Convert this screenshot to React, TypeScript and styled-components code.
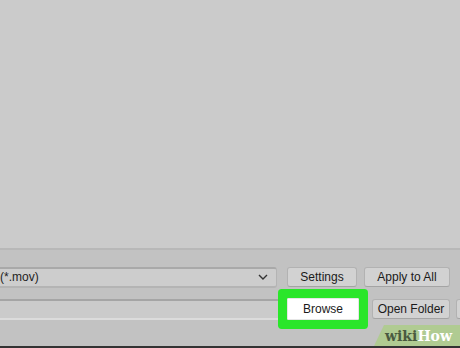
import React from 'react';
import styled, {createGlobalStyle} from 'styled-components';

const Global = createGlobalStyle`
    html, body {
        margin: 0;
        padding: 0;
        background: #cbcbcb;
        overflow: hidden;
    }
    body {
        font-family: "Liberation Sans", Arial, sans-serif;
    }
`

const Screen = styled.div`
    position: relative;
    width: 460px;
    height: 348px;
    display: flex;
    flex-direction: column;
    overflow: hidden;
`

const Preview = styled.div`
    height: 248px;
    background: #cbcbcb;
`

const Panel = styled.div`
    flex: 1;
    display: flex;
    flex-direction: column;
    border-top: 2px solid #b8b8b8;
    background: #c2c2c2;
    padding-top: 16px;
    gap: 10px;
    border-bottom: 2px solid #333;
`

const Row = styled.div`
    display: flex;
    align-items: center;
    height: 22px;
    & > * {
        flex: none;
    }
`

const Combo = styled.div`
    box-sizing: border-box;
    width: 277px;
    height: 21px;
    display: flex;
    align-items: center;
    justify-content: space-between;
    padding: 0 8px 0 0;
    background: #cdcdcd;
    border-top: 2px solid #a9a9a9;
    border-bottom: 2px solid #b4b4b4;
    border-right: 1px solid #b4b4b4;
    border-radius: 0 3px 3px 0;
    font-size: 12px;
    color: #1e1e1e;
`

const Field = styled.div`
    box-sizing: border-box;
    width: 280px;
    height: 21px;
    background: #cbcbcb;
    border-top: 2px solid #a5a5a5;
    border-bottom: 2px solid #dcdcdc;
`

const Button = styled.div<{$w: number; $ml: number; $marked?: boolean}>`
    box-sizing: border-box;
    position: relative;
    width: ${p => p.$w}px;
    margin-left: ${p => p.$ml}px;
    height: ${p => (p.$marked ? 22 : 20)}px;
    display: flex;
    align-items: center;
    justify-content: center;
    background: ${p => (p.$marked ? '#ffffff' : '#d2d2d2')};
    border: 1px solid ${p => (p.$marked ? '#e6e6e6' : '#b2b2b2')};
    border-bottom-color: ${p => (p.$marked ? '#e6e6e6' : '#a4a4a4')};
    border-radius: ${p => (p.$marked ? 1 : 3)}px;
    box-shadow: ${p => (p.$marked ? '0 0 0 9px #2ae62a' : 'none')};
    font-size: 12px;
    color: #1a1a1a;
    white-space: nowrap;
`

const Watermark = styled.div`
    position: absolute;
    right: 0;
    bottom: 2px;
    width: 86px;
    height: 21px;
    background: rgba(170, 205, 130, 0.75);
    clip-path: polygon(10px 0, 100% 0, 100% 100%, 0 100%);
    display: flex;
    align-items: center;
    padding-left: 11px;
    box-sizing: border-box;
    font-family: "DejaVu Serif", "Liberation Serif", serif;
    font-weight: bold;
    font-size: 14px;
`

const Wiki = styled.span`
    color: #4a5a40;
`

const How = styled.span`
    color: #ffffff;
`

export default function App() {
    return (
        <Screen>
            <Global/>
            <Preview/>
            <Panel>
                <Row>
                    <Combo>
                        <span>(*.mov)</span>
                        <svg width="10" height="6" viewBox="0 0 10 6">
                            <path d="M1 1 L5 5 L9 1" fill="none" stroke="#333" strokeWidth="1.4"/>
                        </svg>
                    </Combo>
                    <Button $w={70} $ml={10}>Settings</Button>
                    <Button $w={86} $ml={7}>Apply to All</Button>
                </Row>
                <Row>
                    <Field/>
                    <Button $w={72} $ml={7} $marked>Browse</Button>
                    <Button $w={78} $ml={13}>Open Folder</Button>
                    <Button $w={30} $ml={6}/>
                </Row>
            </Panel>
            <Watermark>
                <Wiki>wiki</Wiki><How>How</How>
            </Watermark>
        </Screen>
    );
}
